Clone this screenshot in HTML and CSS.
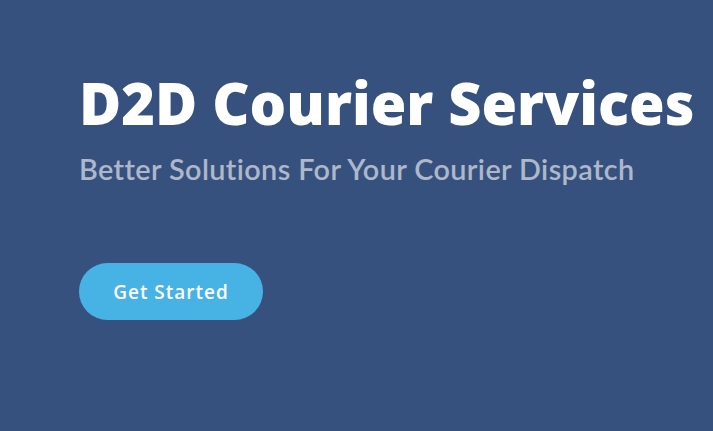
FILE: index.html
```html
<!DOCTYPE html>
<html lang="en">
<head>
<meta charset="utf-8">
<title>D2D Courier Services</title>
<link rel="stylesheet" href="styles.css">
</head>
<body>
<section class="hero">
  <div class="hero-text">
    <h1 class="hero-title">D2D Courier Services</h1>
    <h2 class="hero-subtitle">Better Solutions For Your Courier Dispatch</h2>
    <div class="hero-actions">
      <a class="btn-get-started" href="#">Get Started</a>
    </div>
  </div>
</section>
</body>
</html>
```
FILE: styles.css
```css
html, body {
  margin: 0;
  padding: 0;
  height: 100%;
}
body {
  background: #37517e;
  font-family: "Open Sans", Lato, sans-serif;
  overflow: hidden;
}
.hero {
  height: 100%;
  display: flex;
  flex-direction: column;
  padding: 69px 0 0 79px;
  box-sizing: border-box;
}
.hero-text {
  display: flex;
  flex-direction: column;
  align-items: flex-start;
}
.hero-title {
  margin: 0;
  font-size: 57.6px;
  line-height: 67px;
  font-weight: 800;
  color: #fff;
  white-space: nowrap;
}
.hero-subtitle {
  margin: 16px 0 0 0;
  font-family: Lato, "Open Sans", sans-serif;
  font-size: 28.8px;
  line-height: 34px;
  font-weight: 600;
  letter-spacing: 0.4px;
  color: rgba(255,255,255,0.6);
  white-space: nowrap;
}
.hero-actions {
  margin-top: 77px;
}
.btn-get-started {
  display: inline-flex;
  align-items: center;
  justify-content: center;
  width: 184px;
  height: 57px;
  box-sizing: border-box;
  border-radius: 60px;
  background: #47b2e4;
  color: #fff;
  font-size: 19px;
  font-weight: 600;
  letter-spacing: 1px;
  text-decoration: none;
}
```
